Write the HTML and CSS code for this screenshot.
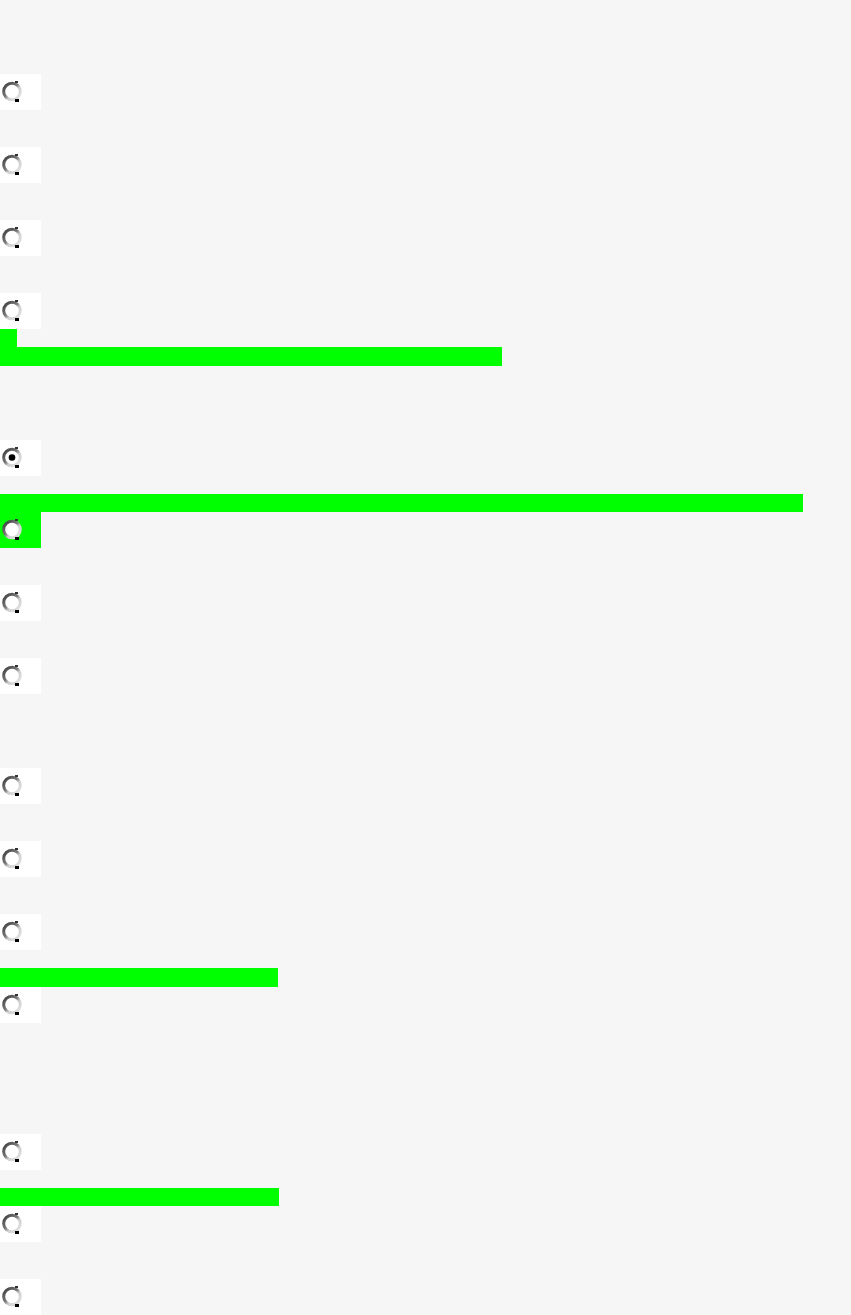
FILE: index.html
```html
<!DOCTYPE html>
<html>
<head>
<meta charset="utf-8">
<link rel="stylesheet" href="styles.css">
</head>
<body>
<svg width="0" height="0" class="defs">
  <defs>
    <linearGradient id="ring" x1="0" y1="0" x2="1" y2="1">
      <stop offset="0" stop-color="#3a3a3a"/>
      <stop offset="0.45" stop-color="#7a7a7a"/>
      <stop offset="0.6" stop-color="#cfcfcf"/>
      <stop offset="1" stop-color="#e6e6e6"/>
    </linearGradient>
  </defs>
</svg>
<div class="page">
  <div class="box m74"><svg class="radio" width="22" height="22" viewBox="0 0 22 22"><circle cx="10" cy="10.5" r="8.3" fill="#fff" stroke="url(#ring)" stroke-width="3"/><rect x="13" y="0" width="3" height="2" fill="#333"/><rect x="13" y="18" width="4" height="3" fill="#000"/></svg></div>
  <div class="box m37"><svg class="radio" width="22" height="22" viewBox="0 0 22 22"><circle cx="10" cy="10.5" r="8.3" fill="#fff" stroke="url(#ring)" stroke-width="3"/><rect x="13" y="0" width="3" height="2" fill="#333"/><rect x="13" y="18" width="4" height="3" fill="#000"/></svg></div>
  <div class="box m37"><svg class="radio" width="22" height="22" viewBox="0 0 22 22"><circle cx="10" cy="10.5" r="8.3" fill="#fff" stroke="url(#ring)" stroke-width="3"/><rect x="13" y="0" width="3" height="2" fill="#333"/><rect x="13" y="18" width="4" height="3" fill="#000"/></svg></div>
  <div class="box m37"><svg class="radio" width="22" height="22" viewBox="0 0 22 22"><circle cx="10" cy="10.5" r="8.3" fill="#fff" stroke="url(#ring)" stroke-width="3"/><rect x="13" y="0" width="3" height="2" fill="#333"/><rect x="13" y="18" width="4" height="3" fill="#000"/></svg></div>
  <div class="notch"></div>
  <div class="bar bar-a"></div>
  <div class="box m74"><svg class="radio" width="22" height="22" viewBox="0 0 22 22"><circle cx="10" cy="10.5" r="8.3" fill="#fff" stroke="url(#ring)" stroke-width="3"/><rect x="13" y="0" width="3" height="2" fill="#333"/><rect x="13" y="18" width="4" height="3" fill="#000"/><circle cx="10" cy="10.5" r="3.3" fill="#000"/></svg></div>
  <div class="bar bar-b m18"></div>
  <div class="box green"><svg class="radio" width="22" height="22" viewBox="0 0 22 22"><circle cx="10" cy="10.5" r="8.3" fill="#fff" stroke="url(#ring)" stroke-width="3"/><rect x="13" y="0" width="3" height="2" fill="#333"/><rect x="13" y="18" width="4" height="3" fill="#000"/></svg></div>
  <div class="box m37"><svg class="radio" width="22" height="22" viewBox="0 0 22 22"><circle cx="10" cy="10.5" r="8.3" fill="#fff" stroke="url(#ring)" stroke-width="3"/><rect x="13" y="0" width="3" height="2" fill="#333"/><rect x="13" y="18" width="4" height="3" fill="#000"/></svg></div>
  <div class="box m37"><svg class="radio" width="22" height="22" viewBox="0 0 22 22"><circle cx="10" cy="10.5" r="8.3" fill="#fff" stroke="url(#ring)" stroke-width="3"/><rect x="13" y="0" width="3" height="2" fill="#333"/><rect x="13" y="18" width="4" height="3" fill="#000"/></svg></div>
  <div class="box m74"><svg class="radio" width="22" height="22" viewBox="0 0 22 22"><circle cx="10" cy="10.5" r="8.3" fill="#fff" stroke="url(#ring)" stroke-width="3"/><rect x="13" y="0" width="3" height="2" fill="#333"/><rect x="13" y="18" width="4" height="3" fill="#000"/></svg></div>
  <div class="box m37"><svg class="radio" width="22" height="22" viewBox="0 0 22 22"><circle cx="10" cy="10.5" r="8.3" fill="#fff" stroke="url(#ring)" stroke-width="3"/><rect x="13" y="0" width="3" height="2" fill="#333"/><rect x="13" y="18" width="4" height="3" fill="#000"/></svg></div>
  <div class="box m37"><svg class="radio" width="22" height="22" viewBox="0 0 22 22"><circle cx="10" cy="10.5" r="8.3" fill="#fff" stroke="url(#ring)" stroke-width="3"/><rect x="13" y="0" width="3" height="2" fill="#333"/><rect x="13" y="18" width="4" height="3" fill="#000"/></svg></div>
  <div class="bar bar-c m18"></div>
  <div class="box"><svg class="radio" width="22" height="22" viewBox="0 0 22 22"><circle cx="10" cy="10.5" r="8.3" fill="#fff" stroke="url(#ring)" stroke-width="3"/><rect x="13" y="0" width="3" height="2" fill="#333"/><rect x="13" y="18" width="4" height="3" fill="#000"/></svg></div>
  <div class="box m111"><svg class="radio" width="22" height="22" viewBox="0 0 22 22"><circle cx="10" cy="10.5" r="8.3" fill="#fff" stroke="url(#ring)" stroke-width="3"/><rect x="13" y="0" width="3" height="2" fill="#333"/><rect x="13" y="18" width="4" height="3" fill="#000"/></svg></div>
  <div class="bar bar-d m18"></div>
  <div class="box"><svg class="radio" width="22" height="22" viewBox="0 0 22 22"><circle cx="10" cy="10.5" r="8.3" fill="#fff" stroke="url(#ring)" stroke-width="3"/><rect x="13" y="0" width="3" height="2" fill="#333"/><rect x="13" y="18" width="4" height="3" fill="#000"/></svg></div>
  <div class="box m37"><svg class="radio" width="22" height="22" viewBox="0 0 22 22"><circle cx="10" cy="10.5" r="8.3" fill="#fff" stroke="url(#ring)" stroke-width="3"/><rect x="13" y="0" width="3" height="2" fill="#333"/><rect x="13" y="18" width="4" height="3" fill="#000"/></svg></div>
</div>
</body>
</html>
```
FILE: styles.css
```css
html, body {
  margin: 0;
  padding: 0;
  background: #f6f6f6;
  font-family: "Liberation Sans", Arial, sans-serif;
}
.defs {
  position: absolute;
  width: 0;
  height: 0;
}
.page {
  display: flow-root;
  width: 851px;
  height: 1315px;
  overflow: hidden;
}
.box {
  width: 41px;
  height: 36px;
  background: #fff;
  box-sizing: border-box;
  padding: 7px 0 0 2px;
}
.box.green {
  background: #00ff00;
}
.radio {
  display: block;
  width: 22px;
  height: 22px;
}
.m18 { margin-top: 18px; }
.m37 { margin-top: 37px; }
.m74 { margin-top: 74px; }
.m111 { margin-top: 111px; }
.notch {
  width: 17px;
  height: 18px;
  background: #00ff00;
}
.bar {
  background: #00ff00;
}
.bar-a { width: 502px; height: 19px; }
.bar-b { width: 803px; height: 18px; }
.bar-c { width: 278px; height: 19px; }
.bar-d { width: 279px; height: 18px; }
```
